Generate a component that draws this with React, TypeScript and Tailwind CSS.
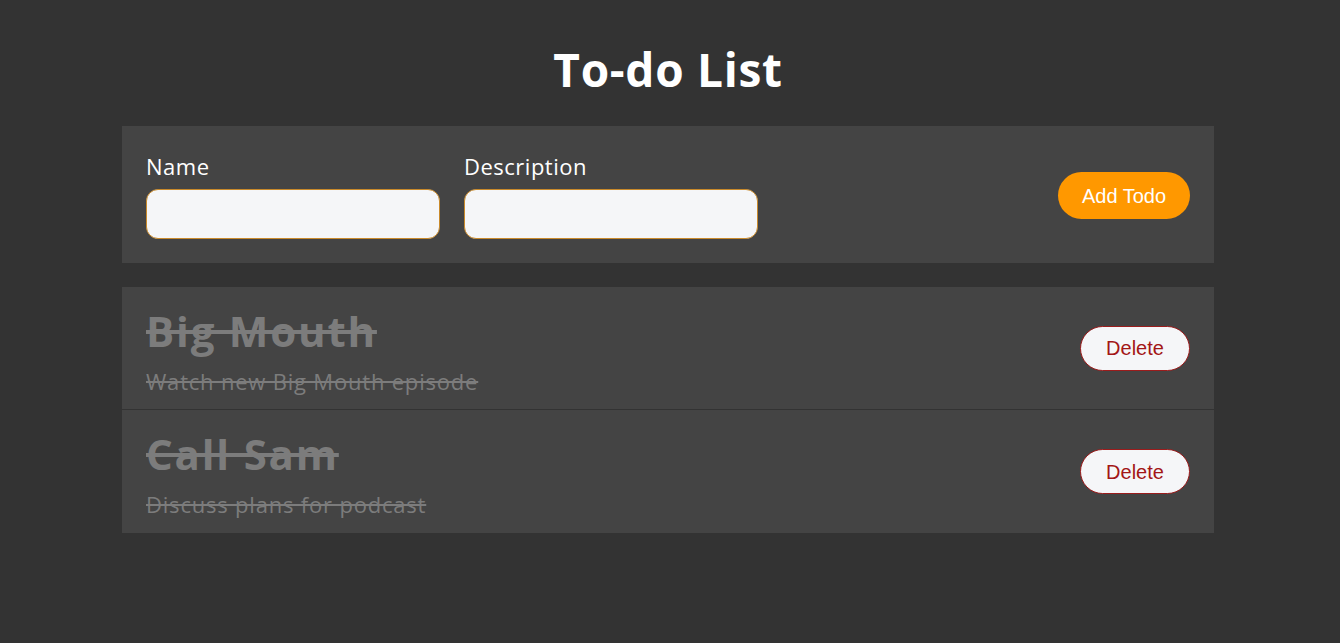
import React from "react";

const todos = [
  { name: "Big Mouth", description: "Watch new Big Mouth episode" },
  { name: "Call Sam", description: "Discuss plans for podcast" },
];

export default function App() {
  return (
    <div
      className="min-h-[643px] w-full bg-[#333333] text-white"
      style={{ fontFamily: "'Open Sans', 'Noto Sans', sans-serif" }}
    >
      <div className="ml-[122px] w-[1092px]">
        <h1 className="pt-[43px] text-center text-[46px] font-bold leading-[52px] tracking-[0.7px] text-white">
          To-do List
        </h1>
        <form
          className="mt-[31px] flex items-center justify-between bg-[#444444] px-6 pt-[26px] pb-6"
          onSubmit={(e) => e.preventDefault()}
        >
          <div className="flex gap-6">
            <label className="flex flex-col">
              <span className="text-[22px] leading-[28px] tracking-[0.5px] text-white">Name</span>
              <input
                className="mt-[9px] h-[50px] w-[294px] rounded-[12px] border border-[#c98a2b] bg-[#f5f6f8] px-3 text-black outline-none"
                type="text"
              />
            </label>
            <label className="flex flex-col">
              <span className="text-[22px] leading-[28px] tracking-[0.5px] text-white">Description</span>
              <input
                className="mt-[9px] h-[50px] w-[294px] rounded-[12px] border border-[#c98a2b] bg-[#f5f6f8] px-3 text-black outline-none"
                type="text"
              />
            </label>
          </div>
          <button
            type="submit"
            className="h-[47px] w-[132px] rounded-full bg-[#ff9800] text-[20px] text-white"
            style={{ fontFamily: "'Liberation Sans', Arial, sans-serif" }}
          >
            Add Todo
          </button>
        </form>
        <div className="mt-6 bg-[#444444]">
          {todos.map((t, i) => (
            <div
              key={t.name}
              className={
                "flex h-[123px] items-center justify-between px-6 " +
                (i === 0 ? "border-b border-[#333333]" : "")
              }
            >
              <div className="flex h-full flex-col pt-5">
                <div className="text-[42px] font-bold leading-[48px] tracking-[1.8px] text-[#7c7c7c] line-through">
                  {t.name}
                </div>
                <div className="mt-3 text-[22px] leading-[28px] tracking-[0.8px] text-[#7c7c7c] line-through">
                  {t.description}
                </div>
              </div>
              <button
                className="h-[45px] w-[110px] rounded-full border border-[#9b1c1c] bg-[#f5f6f8] text-[20px] text-[#a31616]"
                style={{ fontFamily: "'Liberation Sans', Arial, sans-serif" }}
              >
                Delete
              </button>
            </div>
          ))}
        </div>
      </div>
    </div>
  );
}
